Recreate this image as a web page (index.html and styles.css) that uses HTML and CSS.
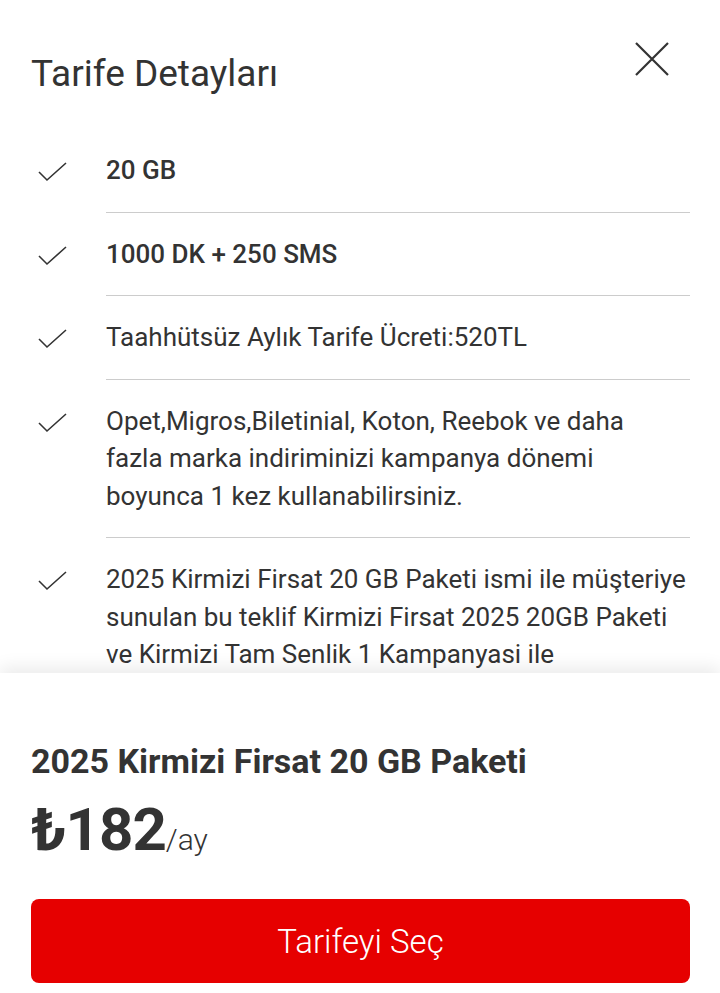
FILE: index.html
```html
<!DOCTYPE html>
<html lang="tr">
<head>
    <meta charset="UTF-8">
    <meta name="viewport" content="width=device-width, initial-scale=1.0">
    <title>Tarife Detayları</title>
    <link rel="stylesheet" href="styles.css">
</head>
<body>
    <div class="page">
        <div class="details">
            <div class="header">
                <h1>Tarife Detayları</h1>
                <button class="close" aria-label="Kapat">
                    <svg width="34" height="34" viewBox="0 0 34 34">
                        <path d="M1 1 L33 33 M33 1 L1 33" stroke="#333" stroke-width="2.2" fill="none"/>
                    </svg>
                </button>
            </div>

            <ul class="features">
                <li class="feature">
                    <span class="check"><svg width="30" height="20" viewBox="0 0 30 20"><path d="M1 10 L9 18 L28 1" stroke="#333" stroke-width="1.6" fill="none"/></svg></span>
                    <div class="feature-text strong">20 GB</div>
                </li>
                <li class="feature">
                    <span class="check"><svg width="30" height="20" viewBox="0 0 30 20"><path d="M1 10 L9 18 L28 1" stroke="#333" stroke-width="1.6" fill="none"/></svg></span>
                    <div class="feature-text strong">1000 DK + 250 SMS</div>
                </li>
                <li class="feature">
                    <span class="check"><svg width="30" height="20" viewBox="0 0 30 20"><path d="M1 10 L9 18 L28 1" stroke="#333" stroke-width="1.6" fill="none"/></svg></span>
                    <div class="feature-text">Taahhütsüz Aylık Tarife Ücreti:520TL</div>
                </li>
                <li class="feature">
                    <span class="check"><svg width="30" height="20" viewBox="0 0 30 20"><path d="M1 10 L9 18 L28 1" stroke="#333" stroke-width="1.6" fill="none"/></svg></span>
                    <div class="feature-text">Opet,Migros,Biletinial, Koton, Reebok ve daha fazla marka indiriminizi kampanya dönemi boyunca 1 kez kullanabilirsiniz.</div>
                </li>
                <li class="feature">
                    <span class="check"><svg width="30" height="20" viewBox="0 0 30 20"><path d="M1 10 L9 18 L28 1" stroke="#333" stroke-width="1.6" fill="none"/></svg></span>
                    <div class="feature-text">2025 Kirmizi Firsat 20 GB Paketi ismi ile müşteriye sunulan bu teklif Kirmizi Firsat 2025 20GB Paketi ve Kirmizi Tam Senlik 1 Kampanyasi ile birleştirilemez.</div>
                </li>
            </ul>
        </div>

        <div class="sheet">
            <h2 class="plan-name">2025 Kirmizi Firsat 20 GB Paketi</h2>
            <div class="price"><span class="amount">₺182</span><span class="period">/ay</span></div>
            <button class="btn">Tarifeyi Seç</button>
        </div>
    </div>
</body>
</html>
```

FILE: styles.css
```css
:root {
    --text-color: #333333;
    --red: #e60000;
    --divider: #cccccc;
}

* {
    margin: 0;
    padding: 0;
    box-sizing: border-box;
    font-family: Roboto, "Noto Sans", Arial, sans-serif;
}

body {
    background-color: white;
    color: var(--text-color);
}

.page {
    height: 993px;
    display: flex;
    flex-direction: column;
    overflow: hidden;
}

.details {
    flex: 1;
    overflow: hidden;
    padding: 42px 30px 0 31px;
}

.header {
    display: flex;
    justify-content: space-between;
    align-items: flex-start;
}

h1 {
    font-size: 37px;
    font-weight: 400;
    line-height: 40px;
    margin-top: 12px;
}

.close {
    background: none;
    border: none;
    width: 34px;
    height: 34px;
    margin-right: 21px;
    cursor: pointer;
}

.features {
    list-style: none;
    margin-top: 35px;
}

.feature {
    display: flex;
    align-items: flex-start;
}

.check {
    width: 75px;
    flex-shrink: 0;
    padding: 33px 0 0 7px;
}

.feature-text {
    flex: 1;
    font-size: 26px;
    line-height: 37.5px;
    padding: 23px 4px 22px 0;
    border-bottom: 1px solid var(--divider);
}

.feature-text.strong {
    font-weight: 500;
}

.sheet {
    flex-shrink: 0;
    height: 320px;
    background-color: white;
    box-shadow: 0 -6px 16px rgba(0, 0, 0, 0.08);
    padding: 68px 30px 0 31px;
}

.plan-name {
    font-size: 34px;
    font-weight: 700;
    line-height: 40px;
}

.price {
    margin-top: 19px;
    display: flex;
    align-items: baseline;
}

.amount {
    font-size: 60px;
    font-weight: 700;
    line-height: 60px;
    letter-spacing: -1px;
}

.period {
    font-size: 30px;
    font-weight: 300;
}

.btn {
    display: block;
    width: 100%;
    height: 84px;
    margin-top: 39px;
    background-color: var(--red);
    color: white;
    border: none;
    border-radius: 8px;
    font-size: 33px;
    font-weight: 300;
    cursor: pointer;
}
```
